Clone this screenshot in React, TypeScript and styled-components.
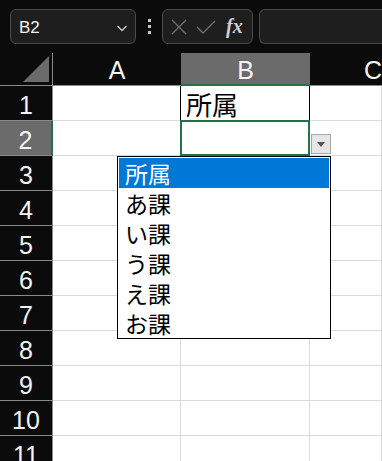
import React from 'react';
import styled, { createGlobalStyle } from 'styled-components';

const rows = [1, 2, 3, 4, 5, 6, 7, 8, 9, 10, 11];
const options = ['所属', 'あ課', 'い課', 'う課', 'え課', 'お課'];

const App: React.FC = () => {
  return (
    <Page>
      <GlobalStyle />
      {/* formula bar */}
      <Toolbar>
        <NameBox>
          <span>B2</span>
          <svg width="14" height="14" viewBox="0 0 14 14">
            <path d="M2.5 5 L7 9.5 L11.5 5" stroke="#d0d0d0" strokeWidth="1.3" fill="none" />
          </svg>
        </NameBox>
        <Dots>
          <i />
          <i />
          <i />
        </Dots>
        <FxBox>
          <svg width="20" height="20" viewBox="0 0 20 20">
            <path d="M3 3 L17 17 M17 3 L3 17" stroke="#6e6e6e" strokeWidth="1.4" />
          </svg>
          <svg width="22" height="20" viewBox="0 0 22 20">
            <path d="M2 10 L8 16 L20 4" stroke="#6e6e6e" strokeWidth="1.4" fill="none" />
          </svg>
          <FxLabel>fx</FxLabel>
        </FxBox>
        <FormulaInput />
      </Toolbar>

      <Sheet>
        <Corner>
          <svg width="27" height="26" viewBox="0 0 27 26">
            <path d="M26 0 L26 26 L0 26 Z" fill="#6b6b6b" />
          </svg>
        </Corner>
        <ColHeader>A</ColHeader>
        <ColHeader $active>B</ColHeader>
        <ColHeader $last>C</ColHeader>

        {rows.map((r) => (
          <React.Fragment key={r}>
            <RowHeader $active={r === 2}>{r}</RowHeader>
            <Cell />
            <Cell $bordered={r === 1} $selected={r === 2}>
              {r === 1 ? '所属' : ''}
            </Cell>
            <Cell />
          </React.Fragment>
        ))}

        <DropButton>
          <svg width="8" height="5" viewBox="0 0 8 5">
            <path d="M0 0 L8 0 L4 5 Z" fill="#555" />
          </svg>
        </DropButton>

        <ListBox>
          {options.map((o, i) => (
            <ListItem key={o} $selected={i === 0}>
              {o}
            </ListItem>
          ))}
        </ListBox>
      </Sheet>
    </Page>
  );
};

const GlobalStyle = createGlobalStyle`
  html, body {
    margin: 0;
    padding: 0;
    background: #ffffff;
    overflow: hidden;
  }
  body {
    font-family: 'Liberation Sans', 'Noto Sans CJK JP', sans-serif;
  }
`;

const Page = styled.div`
  width: 382px;
  height: 461px;
  overflow: hidden;
  background: #fff;
`;

const Toolbar = styled.div`
  height: 53px;
  background: #0b0b0b;
  display: flex;
  align-items: flex-start;
  padding: 9px 0 0 10px;
  box-sizing: border-box;
`;

const NameBox = styled.div`
  width: 126px;
  height: 35px;
  box-sizing: border-box;
  border: 1px solid #4a4a4a;
  border-radius: 6px;
  background: #1e1e1e;
  display: flex;
  align-items: center;
  justify-content: space-between;
  padding: 2px 6px 0 8px;
  color: #f2f2f2;
  font-size: 17px;
  font-family: 'Liberation Sans', sans-serif;
`;

const Dots = styled.div`
  width: 26px;
  height: 35px;
  display: flex;
  flex-direction: column;
  align-items: center;
  justify-content: center;
  gap: 3px;
  i {
    width: 3px;
    height: 3px;
    background: #c8c8c8;
  }
`;

const FxBox = styled.div`
  width: 91px;
  height: 35px;
  box-sizing: border-box;
  border: 1px solid #4a4a4a;
  border-radius: 6px;
  background: #1e1e1e;
  display: flex;
  align-items: center;
  padding: 0 4px 0 6px;
  gap: 6px;
`;

const FxLabel = styled.span`
  font-family: 'Liberation Serif', serif;
  font-style: italic;
  font-weight: bold;
  font-size: 20px;
  color: #cfcfcf;
  margin-left: 3px;
`;

const FormulaInput = styled.div`
  flex: 1;
  height: 35px;
  margin-left: 6px;
  box-sizing: border-box;
  border: 1px solid #4a4a4a;
  border-right: none;
  border-radius: 6px 0 0 6px;
  background: #1e1e1e;
`;

const Sheet = styled.div`
  position: relative;
  display: grid;
  grid-template-columns: 53px 128px 129px 1fr;
  grid-template-rows: 33px repeat(11, 35px);
  background: #fff;
`;

const Corner = styled.div`
  background: #0b0b0b;
  border-right: 1px solid #8a8a8a;
  border-bottom: 1px solid #8a8a8a;
  box-sizing: border-box;
  display: flex;
  align-items: flex-end;
  justify-content: flex-end;
  padding: 0 2px 3px 0;
`;

const ColHeader = styled.div<{ $active?: boolean; $last?: boolean }>`
  background: ${(p) => (p.$active ? '#6b6b6b' : '#0b0b0b')};
  color: #f4f4f4;
  font-size: 25px;
  display: flex;
  align-items: center;
  justify-content: ${(p) => (p.$last ? 'flex-start' : 'center')};
  padding-left: ${(p) => (p.$last ? '54px' : '0')};
  box-sizing: border-box;
  border-bottom: ${(p) => (p.$active ? '2px solid #217346' : '1px solid #8a8a8a')};
  padding-top: 3px;
`;

const RowHeader = styled.div<{ $active?: boolean }>`
  background: ${(p) => (p.$active ? '#6b6b6b' : '#0b0b0b')};
  color: #f4f4f4;
  font-size: 25px;
  display: flex;
  align-items: center;
  justify-content: center;
  box-sizing: border-box;
  border-right: ${(p) => (p.$active ? '2px solid #217346' : '1px solid #8a8a8a')};
  border-bottom: 1px solid #8a8a8a;
  padding-top: 4px;
`;

const Cell = styled.div<{ $bordered?: boolean; $selected?: boolean }>`
  box-sizing: border-box;
  border-right: 1px solid #dadada;
  border-bottom: 1px solid #dadada;
  font-family: 'Noto Sans CJK JP', sans-serif;
  font-size: 26px;
  color: #000;
  display: flex;
  align-items: flex-end;
  padding: 0 0 0 5px;
  line-height: 32px;
  ${(p) =>
    p.$bordered &&
    `
    border-left: 1px solid #000;
    border-right: 1px solid #000;
    margin-left: -1px;
  `}
  ${(p) =>
    p.$selected &&
    `
    border: 2px solid #217346;
    margin: -1px 0 0 -1px;
  `}
`;

const DropButton = styled.div`
  position: absolute;
  left: 311px;
  top: 81px;
  width: 20px;
  height: 20px;
  box-sizing: border-box;
  background: #e6e6e6;
  border: 1px solid #a6a6a6;
  display: flex;
  align-items: center;
  justify-content: center;
`;

const ListBox = styled.div`
  position: absolute;
  left: 117px;
  top: 103px;
  width: 214px;
  box-sizing: border-box;
  border: 1px solid #000;
  background: #fff;
  padding: 1px 1px 0 1px;
`;

const ListItem = styled.div<{ $selected?: boolean }>`
  height: 30px;
  line-height: 30px;
  padding-left: 6px;
  font-family: 'Noto Sans CJK JP', sans-serif;
  font-size: 23px;
  color: ${(p) => (p.$selected ? '#fff' : '#000')};
  background: ${(p) => (p.$selected ? '#0078d7' : 'transparent')};
`;

export default App;
